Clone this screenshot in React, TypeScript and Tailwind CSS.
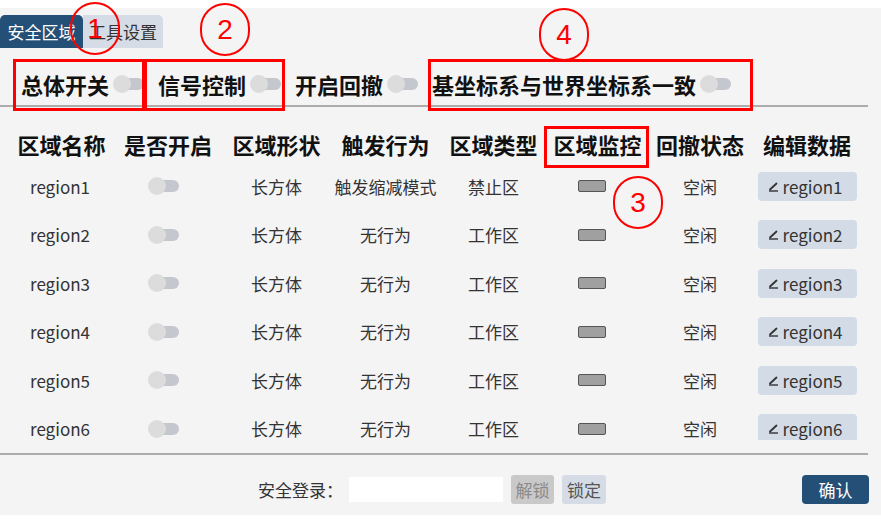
import React from "react";

const FONT = { fontFamily: '"Noto Sans CJK SC", "Noto Sans", sans-serif' };

function Toggle() {
  return (
    <div className="relative h-[20px] w-[31px] shrink-0">
      <div className="absolute left-[4px] right-0 top-[4px] h-[12px] rounded-full bg-[#c4c7cd]" />
      <div className="absolute left-0 top-[1px] h-[18px] w-[18px] rounded-full bg-[#dcdcdc]" />
    </div>
  );
}

function EditIcon() {
  return (
    <svg width="11" height="11" viewBox="0 0 11 11" className="shrink-0">
      <path d="M2 8.5 L8.5 2.5" stroke="#333" strokeWidth="1.8" strokeLinecap="round" />
      <path d="M1 10 H10" stroke="#333" strokeWidth="1.4" />
    </svg>
  );
}

const rows = [
  { name: "region1", action: "触发缩减模式", type: "禁止区" },
  { name: "region2", action: "无行为", type: "工作区" },
  { name: "region3", action: "无行为", type: "工作区" },
  { name: "region4", action: "无行为", type: "工作区" },
  { name: "region5", action: "无行为", type: "工作区" },
  { name: "region6", action: "无行为", type: "工作区" },
];

const headers = ["区域名称", "是否开启", "区域形状", "触发行为", "区域类型", "区域监控", "回撤状态", "编辑数据"];

const GRID = "grid grid-cols-[107px_106px_111px_107px_109px_99px_106px_108px] pl-[8px]";

function Circle({ n, cls }: { n: string; cls: string }) {
  return (
    <div
      className={`absolute flex h-[53px] w-[50px] items-center justify-center rounded-full border-2 border-[#ff0000] text-[28px] leading-none text-[#ff0000] ${cls}`}
      style={{ fontFamily: '"Liberation Sans", Arial, sans-serif' }}
    >
      {n}
    </div>
  );
}

export default function App() {
  return (
    <div className="relative h-[523px] w-[881px] overflow-hidden bg-white pt-[8px] text-[#333]" style={FONT}>
      <div className="flex h-[507px] flex-col bg-[#f4f4f4]">
        {/* tabs */}
        <div className="mt-[7px] flex h-[33px] items-stretch text-[17px]">
          <div className="flex w-[83px] items-center justify-center rounded-t-[5px] bg-[#245078] text-white">安全区域</div>
          <div className="flex w-[80px] items-center justify-center rounded-tr-[5px] bg-[#d5dce6] text-[#333]">工具设置</div>
        </div>

        {/* switches */}
        <div className="mt-[14px] flex h-[44px] items-center gap-[14px] pl-[21px] text-[22px] font-bold text-[#111]">
          <div className="flex items-center gap-[4px]"><span>总体开关</span><Toggle /></div>
          <div className="flex items-center gap-[4px]"><span>信号控制</span><Toggle /></div>
          <div className="flex items-center gap-[4px]"><span>开启回撤</span><Toggle /></div>
          <div className="flex items-center gap-[4px]"><span>基坐标系与世界坐标系一致</span><Toggle /></div>
        </div>
        <div className="mt-[-1px] h-[2px] w-[868px] bg-[#adadad]" />

        {/* header */}
        <div className={`${GRID} mt-[19px] h-[36px] items-center text-[22px] font-bold text-[#111]`}>
          {headers.map((h) => (
            <div key={h} className="text-center">{h}</div>
          ))}
        </div>

        {/* body */}
        <div className="h-[278px] overflow-hidden text-[17px]">
          {rows.map((r) => (
            <div key={r.name} className={`${GRID} h-[48.5px] items-center`}>
              <div className="pr-[3px] text-center">{r.name}</div>
              <div className="flex justify-center"><div className="mr-[9px]"><Toggle /></div></div>
              <div className="text-center">长方体</div>
              <div className="text-center">{r.action}</div>
              <div className="text-center">{r.type}</div>
              <div className="flex justify-center">
                <div className="mr-[11px] h-[12px] w-[28px] rounded-[2px] border border-[#555] bg-[#a0a0a0]" />
              </div>
              <div className="text-center">空闲</div>
              <div className="flex justify-center">
                <div className="flex h-[29px] w-[99px] items-center gap-[4px] rounded-[4px] bg-[#d3dbe6] pl-[10px]">
                  <EditIcon />
                  <span>{r.name}</span>
                </div>
              </div>
            </div>
          ))}
        </div>

        <div className="mt-[13px] h-[2px] w-[868px] bg-[#adadad]" />

        {/* footer */}
        <div className="mt-[20px] flex h-[29px] items-center text-[17px]">
          <span className="ml-[258px]">安全登录：</span>
          <div className="ml-[6px] h-[25px] w-[154px] bg-white" />
          <div className="ml-[8px] flex h-[29px] w-[43px] items-center justify-center rounded-[3px] bg-[#c9c9c9] text-[#8a8a8a]">解锁</div>
          <div className="ml-[8px] flex h-[29px] w-[44px] items-center justify-center rounded-[3px] bg-[#d5dce6] text-[#555]">锁定</div>
          <div className="ml-auto mr-[12px] flex h-[29px] w-[67px] items-center justify-center rounded-[4px] bg-[#245078] text-white">确认</div>
        </div>
      </div>

      {/* annotations */}
      <div className="absolute left-[13px] top-[59px] h-[52px] w-[132px] border-[3px] border-[#ff0000]" />
      <div className="absolute left-[144px] top-[59px] h-[52px] w-[141px] border-[3px] border-[#ff0000]" />
      <div className="absolute left-[428px] top-[59px] h-[52px] w-[325px] border-[3px] border-[#ff0000]" />
      <div className="absolute left-[544px] top-[126px] h-[42px] w-[105px] border-[3px] border-[#ff0000]" />
      <Circle n="1" cls="left-[70px] top-[2px]" />
      <Circle n="2" cls="left-[200px] top-[3px]" />
      <Circle n="4" cls="left-[539px] top-[8px]" />
      <Circle n="3" cls="left-[613px] top-[176px]" />
    </div>
  );
}
